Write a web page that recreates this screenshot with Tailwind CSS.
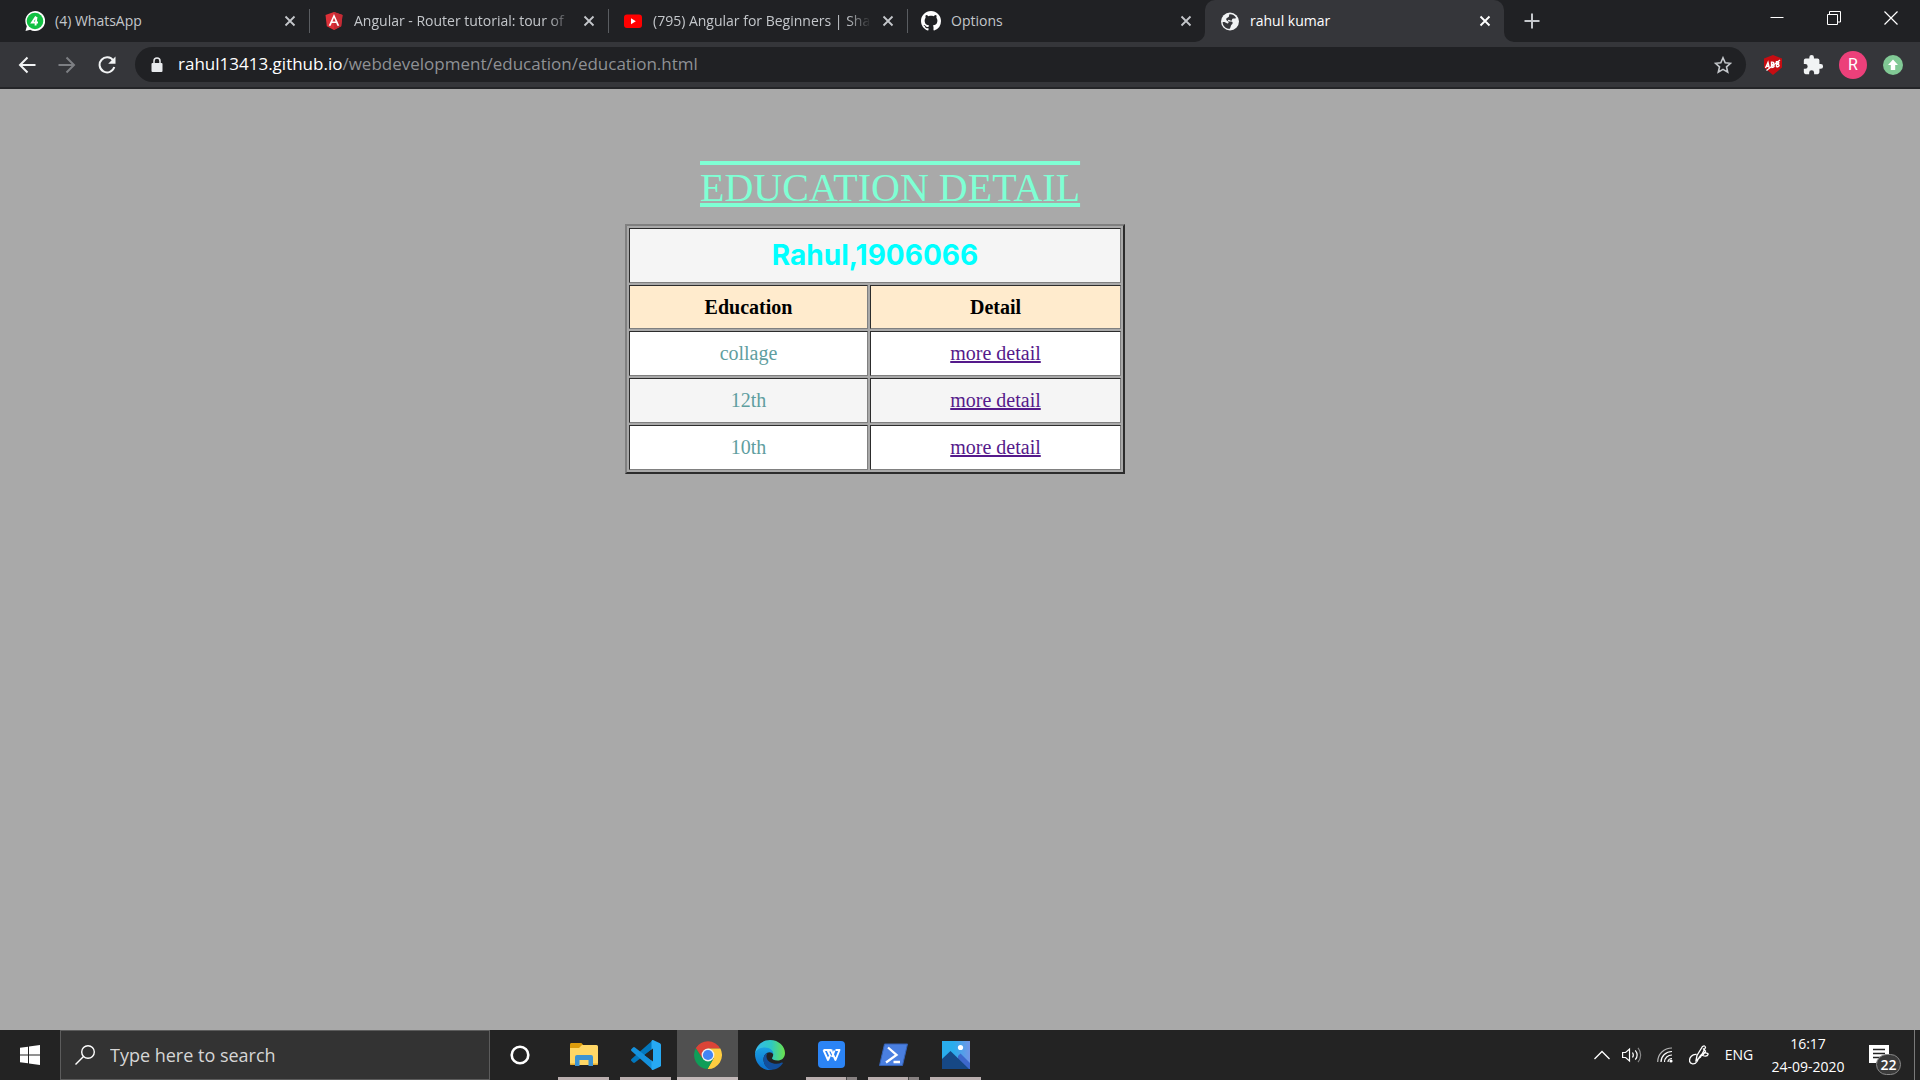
<!DOCTYPE html>
<html lang="en">
<head>
<meta charset="utf-8">
<title>rahul kumar</title>
<script src="https://cdn.jsdelivr.net/npm/@tailwindcss/browser@4"></script>
</head>
<body class="flex min-h-screen flex-col bg-[#a9a9a9] font-['Open_Sans','Noto_Sans',sans-serif] text-sm">

<!-- Tab strip -->
<header class="bg-[#202124]">
  <div class="flex h-[42px] items-stretch justify-between">
    <div class="flex min-w-0 items-stretch pl-2.5 text-[#c4c7cb]">
      <div class="flex w-[299px] items-center gap-2.5 pr-3 pl-[15px]">
        <svg class="size-5 shrink-0" viewBox="0 0 20 20"><path d="M10 0a10 10 0 1 1-4.800 18.700L0.500 20l1.300-4.800A10 10 0 0 1 10 0z" fill="#fff"/><circle cx="10" cy="10" r="8.300" fill="#12c143"/><path d="M11 5.500 7 11.500h6M11.500 6 10.500 14.500" fill="none" stroke="#fff" stroke-width="1.900"/></svg>
        <span class="flex-1 overflow-hidden whitespace-nowrap">(4) WhatsApp</span>
        <button aria-label="Close tab" class="grid size-3.5 place-items-center"><svg class="size-3" viewBox="0 0 12 12"><path d="M1.500 1.500l9 9M10.500 1.500l-9 9" stroke="currentColor" stroke-width="1.800"/></svg></button>
      </div>
      <div class="flex w-[299px] items-center gap-2.5 bg-[linear-gradient(#5a5d61,#5a5d61)] bg-[size:1px_24px] bg-[position:0_9px] bg-no-repeat pr-3 pl-[15px]">
        <svg class="size-5 shrink-0" viewBox="0 0 20 20"><path d="M10 1l8.500 3-1.300 11.200L10 19l-7.200-3.800L1.500 4z" fill="#dd3038"/><path d="M10 1l8.500 3-1.300 11.200L10 19z" fill="#c52b35"/><path d="M10 3 4.700 14.700h2l1.100-2.600h4.400l1.100 2.600h2zm0 3.700 1.600 3.700H8.400z" fill="#fff"/></svg>
        <span class="flex-1 overflow-hidden whitespace-nowrap [mask-image:linear-gradient(to_left,transparent,black_24px)]">Angular - Router tutorial: tour of</span>
        <button aria-label="Close tab" class="grid size-3.5 place-items-center"><svg class="size-3" viewBox="0 0 12 12"><path d="M1.500 1.500l9 9M10.500 1.500l-9 9" stroke="currentColor" stroke-width="1.800"/></svg></button>
      </div>
      <div class="flex w-[299px] items-center gap-2.5 bg-[linear-gradient(#5a5d61,#5a5d61)] bg-[size:1px_24px] bg-[position:0_9px] bg-no-repeat pr-3 pl-[15px]">
        <svg class="size-5 shrink-0" viewBox="0 0 20 20"><rect x="1" y="3.500" width="18" height="13.500" rx="3" fill="#f00"/><path d="M8 7.300v6l4.800-3z" fill="#fff"/></svg>
        <span class="flex-1 overflow-hidden whitespace-nowrap [mask-image:linear-gradient(to_left,transparent,black_24px)]">(795) Angular for Beginners | Sha</span>
        <button aria-label="Close tab" class="grid size-3.5 place-items-center"><svg class="size-3" viewBox="0 0 12 12"><path d="M1.500 1.500l9 9M10.500 1.500l-9 9" stroke="currentColor" stroke-width="1.800"/></svg></button>
      </div>
      <div class="flex w-[298px] items-center gap-2.5 bg-[linear-gradient(#5a5d61,#5a5d61)] bg-[size:1px_24px] bg-[position:0_9px] bg-no-repeat pr-3 pl-[14px]">
        <svg class="size-5 shrink-0" viewBox="0 0 16 16"><path fill="#fff" d="M8 0C3.580 0 0 3.580 0 8c0 3.540 2.290 6.530 5.470 7.590.4.070.55-.17.55-.38 0-.19-.010-.82-.010-1.490-2.010.37-2.530-.49-2.690-.94-.090-.23-.48-.94-.82-1.130-.28-.15-.68-.52-.010-.53.63-.010 1.080.58 1.230.82.72 1.210 1.870.87 2.330.66.070-.52.28-.87.51-1.070-1.780-.2-3.640-.89-3.640-3.950 0-.87.31-1.590.82-2.150-.080-.2-.36-1.020.080-2.120 0 0 .67-.21 2.200.82.64-.18 1.320-.27 2-.27s1.360.090 2 .27c1.530-1.040 2.200-.82 2.200-.82.44 1.100.16 1.920.080 2.120.51.56.82 1.270.82 2.150 0 3.070-1.870 3.750-3.650 3.950.29.25.54.73.54 1.480 0 1.070-.010 1.930-.010 2.200 0 .21.15.46.55.38A8.010 8.010 0 0 0 16 8c0-4.420-3.580-8-8-8z"/></svg>
        <span class="flex-1 overflow-hidden whitespace-nowrap">Options</span>
        <button aria-label="Close tab" class="grid size-3.5 place-items-center"><svg class="size-3" viewBox="0 0 12 12"><path d="M1.500 1.500l9 9M10.500 1.500l-9 9" stroke="currentColor" stroke-width="1.800"/></svg></button>
      </div>
      <div class="relative flex w-[299px] items-center gap-2.5 rounded-t-[10px] bg-[#35363a] pr-3 pl-[15px] text-white">
        <svg class="absolute bottom-0 -left-2.5 size-2.5" viewBox="0 0 10 10"><path d="M10 0v10H0A10 10 0 0 0 10 0z" fill="#35363a"/></svg>
        <svg class="absolute -right-2.5 bottom-0 size-2.5" viewBox="0 0 10 10"><path d="M0 0v10h10A10 10 0 0 1 0 0z" fill="#35363a"/></svg>
        <svg class="size-5 shrink-0" viewBox="0 0 20 20"><circle cx="10" cy="10.500" r="9" fill="#f1f3f4"/><path d="M9.500 3.200c3-.3 5.500 1.400 6.600 3.700-1.200 1-2.700.2-3.600.9-.8.700-.2 1.800-1.200 2-1.300.2-1.700-1.200-3-.9-.9.400-.2 1.300.6 1.500 1.400.4 3-.4 3.600.9.500 1.200-.2 1.800-1 2.400-.9.700-.6 2.400-1.700 4.100-4 .2-7.100-3-7.200-6.600 1.900-.5 3 .4 4.200 1 1.200.7 2.400-.4 1.500-1.500C7.400 9.700 6 9.600 6.200 8c.2-1.300 2-1.300 2.600-2.300.5-.9.100-1.900.7-2.500z" fill="#35363a"/></svg>
        <span class="flex-1 overflow-hidden whitespace-nowrap">rahul kumar</span>
        <button aria-label="Close tab" class="grid size-3.5 place-items-center"><svg class="size-3" viewBox="0 0 12 12"><path d="M1.500 1.500l9 9M10.500 1.500l-9 9" stroke="currentColor" stroke-width="1.900"/></svg></button>
      </div>
      <button aria-label="New tab" class="ml-[13px] grid w-[30px] place-items-center"><svg class="size-4" viewBox="0 0 16 16"><path d="M8 .5v15M.5 8h15" stroke="#c4c7cb" stroke-width="2"/></svg></button>
    </div>
    <div class="flex h-9 pr-px text-white">
      <button aria-label="Minimize" class="grid w-[57px] place-items-center"><svg class="size-[14px]" viewBox="0 0 14 14"><path d="M.5 6.500h13" stroke="currentColor"/></svg></button>
      <button aria-label="Restore" class="grid w-[57px] place-items-center"><svg class="size-[14px]" viewBox="0 0 14 14"><path d="M.5 3.500h10v10H.5zM2.500 3V.5h11v10.500H11" fill="none" stroke="currentColor"/></svg></button>
      <button aria-label="Close" class="grid w-[57px] place-items-center"><svg class="size-[14px]" viewBox="0 0 14 14"><path d="M.5.5l13 13M13.500.5l-13 13" stroke="currentColor" stroke-width="1.200"/></svg></button>
    </div>
  </div>

  <!-- Toolbar -->
  <div class="flex h-[47px] items-center border-b-2 border-[#242528] bg-[#35363a] pr-[7px] pl-[7px]">
    <button aria-label="Back" class="grid size-10 place-items-center"><svg class="size-[18px]" viewBox="0 0 18 18"><path d="M17.500 9H2M9.500 1.500 2 9l7.500 7.500" fill="none" stroke="#f1f3f4" stroke-width="2"/></svg></button>
    <button aria-label="Forward" class="grid size-10 place-items-center"><svg class="size-[18px]" viewBox="0 0 18 18"><path d="M.5 9H16M8.500 1.500 16 9l-7.500 7.500" fill="none" stroke="#7d7f83" stroke-width="2"/></svg></button>
    <button aria-label="Reload" class="grid size-10 place-items-center"><svg class="size-[18px]" viewBox="0 0 18 18"><path d="M15.300 4.600A7.500 7.500 0 1 0 16.300 11" fill="none" stroke="#f1f3f4" stroke-width="2"/><path d="M17.500.5v7.300h-7.300z" fill="#f1f3f4"/></svg></button>
    <div class="ml-2 flex h-[35px] flex-1 items-center rounded-full bg-[#202124] pr-3.5 pl-4">
      <svg class="mr-[15px] h-4 w-3" viewBox="0 0 12 16"><rect x="0.500" y="6" width="11" height="9" rx="1" fill="#e8eaed"/><path d="M3 6.500V4a3 3 0 0 1 6 0v2.500" fill="none" stroke="#e8eaed" stroke-width="1.500"/></svg>
      <div role="textbox" aria-label="Address" contenteditable="true" class="flex-1 whitespace-nowrap text-[17px] text-[#8f9195] outline-none"><span class="text-white">rahul13413.github.io</span>/webdevelopment/education/education.html</div>
      <button aria-label="Bookmark this tab"><svg class="size-[18px]" viewBox="0 0 18 18"><path d="M9 1.800l2.200 5 5.300.5-4 3.600 1.200 5.300L9 13.400l-4.700 2.800 1.200-5.300-4-3.600 5.300-.5z" fill="none" stroke="#c4c7cb" stroke-width="1.600"/></svg></button>
    </div>
    <div class="ml-[7px] flex">
      <button aria-label="Ad blocker" class="grid size-10 place-items-center"><svg class="size-5" viewBox="0 0 20 20"><path d="M10 0l9 3.500v9L10 20l-9-7.500v-9z" fill="#c70d12"/><path d="M2.500 13 5 7.500 6.300 13M3.300 11.300h3M8.500 12.500V7.200c3-.5 3 2.200.3 2.600 3-.2 3.200 2.500-.3 2.700M13.500 12v-5.300c3-.5 3 2 .3 2.400 3.200 0 3 2.700-.3 2.900" fill="none" stroke="#fff" stroke-width="1.400"/><path d="M3.500 15.500 17 5" stroke="#fff" stroke-width="1.200"/></svg></button>
      <button aria-label="Extensions" class="grid size-10 place-items-center"><svg class="size-[22px]" viewBox="0 0 24 24"><path fill="#f1f3f4" d="M20.500 11H19V7a2 2 0 0 0-2-2h-4V3.500a2.500 2.500 0 0 0-5 0V5H4a2 2 0 0 0-2 2v3.800h1.500a2.700 2.700 0 0 1 0 5.400H2V20a2 2 0 0 0 2 2h3.800v-1.500a2.700 2.700 0 0 1 5.400 0V22H17a2 2 0 0 0 2-2v-4h1.500a2.500 2.500 0 0 0 0-5z"/></svg></button>
      <button aria-label="Profile" class="grid size-10 place-items-center"><span class="grid size-7 place-items-center rounded-full bg-[#ec407a] font-[Roboto,sans-serif] text-base text-white">R</span></button>
      <button aria-label="Update Chrome" class="grid size-10 place-items-center"><svg class="size-5" viewBox="0 0 20 20"><circle cx="10" cy="10" r="10" fill="#81c995"/><path d="M10 4.500l5 5.500h-2.800v5H7.800v-5H5z" fill="#fff"/></svg></button>
    </div>
  </div>
</header>

<!-- Page -->
<main class="flex-1 pt-[69px] pl-[625px] font-['Liberation_Serif',serif] text-xl">
  <h1 class="ml-[75px] text-[40px]/[60px] text-[#7fffd4] decoration-4 underline-offset-2 [text-decoration-line:underline_overline]">EDUCATION DETAIL</h1>
  <table class="mt-1.5 w-[500px] table-fixed border-separate border-spacing-[2px] border-2 border-t-[#808080] border-r-[#2c2c2c] border-b-[#2c2c2c] border-l-[#808080] text-center text-[#5f9ea0]">
    <colgroup><col class="w-[239px]"><col></colgroup>
    <thead>
      <tr class="h-[55px] bg-[#f5f5f5]"><th colspan="2" class="border border-t-[#2c2c2c] border-r-[#808080] border-b-[#808080] border-l-[#2c2c2c] p-0 pb-0.5 font-[Inter,sans-serif] text-[28px]/[32px] font-bold text-[#00ffff]">Rahul,1906066</th></tr>
      <tr class="h-11 bg-[#ffebcd] text-black">
        <th class="border border-t-[#2c2c2c] border-r-[#808080] border-b-[#808080] border-l-[#2c2c2c] p-0">Education</th>
        <th class="border border-t-[#2c2c2c] border-r-[#808080] border-b-[#808080] border-l-[#2c2c2c] p-0">Detail</th>
      </tr>
    </thead>
    <tbody>
      <tr class="h-[45px] bg-white">
        <td class="border border-t-[#2c2c2c] border-r-[#808080] border-b-[#808080] border-l-[#2c2c2c] p-0 pb-0.5">collage</td>
        <td class="border border-t-[#2c2c2c] border-r-[#808080] border-b-[#808080] border-l-[#2c2c2c] p-0 pb-0.5"><a href="#" class="text-[#551a8b] underline decoration-2">more detail</a></td>
      </tr>
      <tr class="h-[45px] bg-[#f5f5f5]">
        <td class="border border-t-[#2c2c2c] border-r-[#808080] border-b-[#808080] border-l-[#2c2c2c] p-0 pb-0.5">12th</td>
        <td class="border border-t-[#2c2c2c] border-r-[#808080] border-b-[#808080] border-l-[#2c2c2c] p-0 pb-0.5"><a href="#" class="text-[#551a8b] underline decoration-2">more detail</a></td>
      </tr>
      <tr class="h-[45px] bg-white">
        <td class="border border-t-[#2c2c2c] border-r-[#808080] border-b-[#808080] border-l-[#2c2c2c] p-0 pb-0.5">10th</td>
        <td class="border border-t-[#2c2c2c] border-r-[#808080] border-b-[#808080] border-l-[#2c2c2c] p-0 pb-0.5"><a href="#" class="text-[#551a8b] underline decoration-2">more detail</a></td>
      </tr>
    </tbody>
  </table>
</main>

<!-- Taskbar -->
<footer class="flex h-[50px] items-stretch bg-[#232323] text-white">
  <button aria-label="Start" class="grid w-[60px] place-items-center"><svg class="size-5" viewBox="0 0 20 20"><path fill="#fff" d="M0 2.800 8 1.700v7.800H0zM9 1.500 20 0v9.500H9zM0 10.500h8v7.800l-8-1.100zM9 10.500h11V20L9 18.500z"/></svg></button>
  <label class="flex w-[430px] items-center border border-[#5c5c5c] bg-[#333] pl-3.5">
    <svg class="size-5" viewBox="0 0 20 20"><circle cx="13" cy="7" r="6.300" fill="none" stroke="#fff" stroke-width="1.400"/><path d="M8.500 11.500.5 19.500" stroke="#fff" stroke-width="1.400"/></svg>
    <input type="text" aria-label="Search" placeholder="Type here to search" class="ml-[15px] flex-1 bg-transparent text-lg outline-none placeholder:text-[#d6d6d6]">
  </label>
  <button aria-label="Cortana" class="grid w-[60px] place-items-center"><svg class="size-5" viewBox="0 0 20 20"><circle cx="10" cy="10" r="8.300" fill="none" stroke="#fff" stroke-width="2.600"/></svg></button>
  <div class="ml-[3px] flex gap-px">
    <button aria-label="File Explorer" class="flex w-[61px] flex-col items-center"><span class="grid flex-1 place-items-center pt-0.5"><svg class="size-7" viewBox="0 0 28 28"><path d="M0 3.500C0 2.700.6 2 1.400 2h10l1.800 2L11 8H0z" fill="#dc9c0c"/><path d="M0 7h9l3-3h14.500A1.500 1.500 0 0 1 28 5.500v17a1.500 1.500 0 0 1-1.500 1.500h-25A1.500 1.500 0 0 1 0 22.500z" fill="#ffd766"/><path d="M5 25V16a2 2 0 0 1 2-2h14a2 2 0 0 1 2 2v9h-4.500v-6h-9v6z" fill="#3c93d3"/><path d="M0 22.500h5V24H1.500A1.500 1.500 0 0 1 0 22.500zM23 22.500h5a1.500 1.500 0 0 1-1.500 1.500H23z" fill="#e9ae2c"/></svg></span><span class="h-[3px] w-[51px] bg-[#b9aeae]"></span></button>
    <button aria-label="Visual Studio Code" class="flex w-[61px] flex-col items-center"><span class="grid flex-1 place-items-center pt-0.5"><svg class="size-[30px]" viewBox="0 0 30 30"><path d="M22 0v8.500L4 22.500a1.500 1.500 0 0 1-2 0L.5 21a1.300 1.300 0 0 1 0-1.900z" fill="#0277bd"/><path d="M22 30v-8.500L4 7.500a1.500 1.500 0 0 0-2 0L.5 9a1.300 1.300 0 0 0 0 1.900z" fill="#1591dc"/><path d="M22 0l7 3.200c.6.300 1 .9 1 1.600v20.400c0 .7-.4 1.300-1 1.600L22 30c-1 .2-1.500-.5-1.500-1.500v-27C20.500.5 21 0 22 0z" fill="#27a9f2"/><path d="M22 8.500v13L13.500 15z" fill="#232323"/></svg></span><span class="h-[3px] w-[51px] bg-[#b9aeae]"></span></button>
    <button aria-label="Google Chrome" class="flex w-[61px] flex-col items-center bg-[#505050]"><span class="grid flex-1 place-items-center pt-0.5"><svg class="size-7" viewBox="0 0 28 28"><path d="M14 14 1.900 7A14 14 0 0 1 26.100 7.500L14 7.500z" fill="#db4437"/><path d="M14 7.500h12.400A14 14 0 0 1 13.500 28l6-10.500z" fill="#ffcd40"/><path d="M1.900 7A14 14 0 0 0 13.500 28l6-10.500L14 14 8.400 17.200z" fill="#0f9d58"/><path d="M1.900 7 8.400 17.300 14 7.500z" fill="#db4437"/><circle cx="14" cy="14" r="6.400" fill="#f1f1f1"/><circle cx="14" cy="14" r="5.100" fill="#4285f4"/></svg></span><span class="h-[3px] w-full bg-[#c2b8b8]"></span></button>
    <button aria-label="Microsoft Edge" class="flex w-[61px] flex-col items-center"><span class="grid flex-1 place-items-center pt-0.5"><svg class="size-[30px]" viewBox="0 0 30 30"><defs><linearGradient id="edgeTop"><stop offset="0" stop-color="#35b8f1"/><stop offset=".55" stop-color="#2fc9c0"/><stop offset="1" stop-color="#6be24b"/></linearGradient><linearGradient id="edgeSide" x2="0" y2="1"><stop offset="0" stop-color="#1ba1e2"/><stop offset="1" stop-color="#0b6fce"/></linearGradient></defs><path d="M0 14C.5 6 7 0 15 0c9 0 15 6.500 15 13 0 5-3.500 7.500-7.500 7.500-3.500 0-5.500-1.200-5.500-2.200 0-.8 1.200-1.200 1.200-3.800 0-3-3-6-8-6-5 0-9 2.500-10.200 5.500z" fill="url(#edgeTop)"/><path d="M0 14C1 9.500 5.500 7.500 10 7.500c5.500 0 8.500 3.500 8.200 7-.5-1.500-2-2.200-3.700-2.200-3 0-6 3-6 7.200 0 5 4 9.500 9 10.200C8 31.500 0 24 0 14z" fill="url(#edgeSide)"/><path d="M11 13.500c-4 4-3.200 12.500 3.500 16 5.500 1 10.500-1.700 13.200-6 .5-.8-.2-1.300-1-.9C21 25.500 12 23 11.500 17c-.1-1.500.1-2.500 1-3.500z" fill="#124f9c"/></svg></span><span class="h-[3px]"></span></button>
    <button aria-label="WPS Office" class="flex w-[61px] flex-col items-center"><span class="grid flex-1 place-items-center pt-0.5"><svg class="size-[27px]" viewBox="0 0 27 27"><rect width="27" height="27" rx="4" fill="#2b84f5"/><path d="M5.500 9h7.500l4.500 10 4-10H17.500M5.500 9l4.500 10 2.500-5.500M10 9.500l4.500 0M9.500 9l3 6.500M14 16l2.500-6.500" fill="none" stroke="#fff" stroke-width="1.900" stroke-linejoin="round"/></svg></span><span class="flex h-[3px] w-[51px] bg-[#b9aeae]"><span class="ml-auto w-[11px] border-l border-[#4a4848] bg-[#878181]"></span></span></button>
    <button aria-label="PowerShell" class="flex w-[61px] flex-col items-center"><span class="grid flex-1 place-items-center pt-0.5"><svg class="h-6 w-[29px]" viewBox="0 0 29 24"><path d="M5.500 1H28.500L23.500 22.500H.5z" fill="#4a7fe0" stroke="#3461b4"/><path d="M9 4.500l8.500 7.500L7 19.500M14.500 19h6.500" fill="none" stroke="#fff" stroke-width="2.300"/></svg></span><span class="flex h-[3px] w-[51px] bg-[#b9aeae]"><span class="ml-auto w-[11px] border-l border-[#4a4848] bg-[#878181]"></span></span></button>
    <button aria-label="Photos" class="flex w-[61px] flex-col items-center"><span class="grid flex-1 place-items-center pt-0.5"><svg class="size-7" viewBox="0 0 28 28"><defs><linearGradient id="sky"><stop offset=".4" stop-color="#29adec"/><stop offset="1" stop-color="#7395e6"/></linearGradient></defs><rect width="28" height="28" fill="url(#sky)"/><path d="M16 15l2.500-2.500L28 22v6H16z" fill="#3d68cc"/><path d="M0 18 8.500 10 27 28H0z" fill="#164885"/><circle cx="18.500" cy="6.500" r="2.600" fill="#fff"/></svg></span><span class="h-[3px] w-[51px] bg-[#b9aeae]"></span></button>
  </div>

  <div class="ml-auto flex items-center">
    <button aria-label="Show hidden icons" class="grid w-8 place-items-center"><svg class="h-[10px] w-4" viewBox="0 0 16 10"><path d="M.5 9 8 1.500 15.500 9" fill="none" stroke="#fff" stroke-width="1.300"/></svg></button>
    <button aria-label="Volume" class="grid w-7 place-items-center"><svg class="h-[18px] w-5" viewBox="0 0 20 18"><path d="M.6 6.500h3L7.500 3v12l-3.900-3.500h-3z" fill="none" stroke="#fff" stroke-width="1.200"/><path d="M10.500 6.500c1 1.500 1 3.500 0 5M13.300 4.300c2.200 2.800 2.200 6.600 0 9.400" fill="none" stroke="#fff" stroke-width="1.200"/><path d="M16 1.800c3.500 4.300 3.500 10.100 0 14.400" fill="none" stroke="#888" stroke-width="1.200"/></svg></button>
    <button aria-label="Network" class="ml-px grid w-9 place-items-center"><svg class="size-4" viewBox="0 0 16 16"><g fill="none" stroke="#fff" stroke-width="1.200"><path d="M.7 15C.7 7 7 1 15 1" stroke="#b5b5b5"/><path d="M4 15c0-6 5-10.500 11-10.500M7.500 15c0-4 3.300-7 7.500-7M11 15c0-2 1.800-3.500 4-3.500"/></g><circle cx="14" cy="14" r="1.600" fill="#fff"/></svg></button>
    <button aria-label="Windows Ink Workspace" class="grid w-8 place-items-center"><svg class="size-5" viewBox="0 0 20 20"><path d="M7 15.500 8 10.500 13.500 1.500q2.500-1.500 3 1L11.500 12zM14 3.500l2.500 2.500-3 5M7.500 9.500C3 9 .5 12.500.5 15.500c0 4 5.500 4.500 7.500 1 1.800-3 2.500-6.500 6-8 2.500-1 5.500-.5 5 1-.5 2-4 2-6.500.5" fill="none" stroke="#fff" stroke-width="1.300"/></svg></button>
    <button aria-label="Input language" class="ml-[5px] w-[38px] text-sm">ENG</button>
    <button class="ml-2 w-[84px] text-center text-sm/[23px]"><time class="block">16:17</time><time class="block">24-09-2020</time></button>
    <button aria-label="Notifications" class="relative ml-[19px] h-[50px] w-[45px]">
      <svg class="absolute top-[15px] left-0 h-[18px] w-5" viewBox="0 0 20 18"><path d="M0 0h20v17H8l-1 1H0z" fill="#fff"/><path d="M4 4.500h12M4 8.500h12M4 12.500h8" stroke="#232323" stroke-width="1.300"/></svg>
      <span class="absolute top-6 left-[7px] grid h-[21px] w-[25px] place-items-center rounded-full border border-[#8a8a8a] bg-[#3a3a3a] text-sm/[16px] font-semibold">22</span>
    </button>
    <button aria-label="Show desktop" class="h-[50px] w-1.5 border-l border-[#7a7a7a]"></button>
  </div>
</footer>
</body>
</html>
